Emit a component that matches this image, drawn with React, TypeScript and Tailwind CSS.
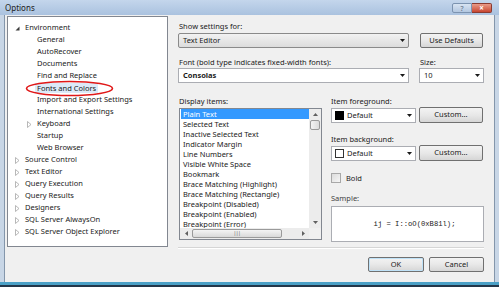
import React from "react"

const envChildren = [
  "General",
  "AutoRecover",
  "Documents",
  "Find and Replace",
  "Fonts and Colors",
  "Import and Export Settings",
  "International Settings",
  "Keyboard",
  "Startup",
  "Web Browser",
]

const topLevel = [
  "Source Control",
  "Text Editor",
  "Query Execution",
  "Query Results",
  "Designers",
  "SQL Server AlwaysOn",
  "SQL Server Object Explorer",
]

const displayItems = [
  "Plain Text",
  "Selected Text",
  "Inactive Selected Text",
  "Indicator Margin",
  "Line Numbers",
  "Visible White Space",
  "Bookmark",
  "Brace Matching (Highlight)",
  "Brace Matching (Rectangle)",
  "Breakpoint (Disabled)",
  "Breakpoint (Enabled)",
  "Breakpoint (Error)",
]

const DownArrow = () => (
  <svg width="5" height="3" viewBox="0 0 5 3">
    <polygon points="0,0 5,0 2.5,3" fill="#1a1a1a" />
  </svg>
)

const Collapsed = () => (
  <svg width="5" height="7" viewBox="0 0 5 7">
    <polygon points="0.5,0.5 4,3.5 0.5,6.5" fill="none" stroke="#a6a6a6" strokeWidth="0.8" />
  </svg>
)

const Expanded = () => (
  <svg width="5" height="5" viewBox="0 0 5 5">
    <polygon points="4.5,0.5 4.5,4.5 0.5,4.5" fill="#3c3c3c" />
  </svg>
)

const TreeRow = ({ label, level, icon, selected }: { label: string; level: number; icon?: React.ReactNode; selected?: boolean }) => (
  <div className={`h-[12px] flex items-center ${level === 0 ? "pl-[7px]" : "pl-[19px]"}`}>
    <span className="w-[10px] h-[12px] flex items-center justify-start">{icon}</span>
    <span className={selected ? "bg-[#dceaf8] -ml-[2px] px-[2px] leading-[10px]" : ""}>{label}</span>
  </div>
)

const Btn = ({ children, className }: { children: React.ReactNode; className?: string }) => (
  <div
    className={`h-[15px] flex items-center justify-center rounded-[2px] border border-[#707070] bg-gradient-to-b from-[#f3f3f3] via-[#e8e8e8] to-[#d6d6d6] text-[#1a1a1a] ${className ?? ""}`}
  >
    {children}
  </div>
)

const Combo = ({ children, className, raised }: { children: React.ReactNode; className?: string; raised?: boolean }) => (
  <div
    className={`h-[15px] flex items-center justify-between pl-[3px] pr-[3px] ${
      raised
        ? "rounded-[2px] border border-[#8a8a8a] bg-gradient-to-b from-[#f2f2f2] to-[#dcdcdc]"
        : "border border-[#abadb3] bg-white"
    } ${className ?? ""}`}
  >
    <div className="flex items-center gap-[3px]">{children}</div>
    <DownArrow />
  </div>
)

const ScrollArrow = ({ dir }: { dir: "up" | "down" | "left" | "right" }) => {
  const pts = {
    up: "0,3 5,3 2.5,0",
    down: "0,0 5,0 2.5,3",
    left: "3,0 3,5 0,2.5",
    right: "0,0 0,5 3,2.5",
  }[dir]
  const vertical = dir === "up" || dir === "down"
  return (
    <svg width={vertical ? 5 : 3} height={vertical ? 3 : 5} viewBox={vertical ? "0 0 5 3" : "0 0 3 5"}>
      <polygon points={pts} fill="#606060" />
    </svg>
  )
}

export default function App() {
  return (
    <div className="w-[499px] h-[287px] flex flex-col bg-[#c8d6e6] font-['Noto_Sans',sans-serif] text-[7.5px] text-[#1a1a1a] overflow-hidden">
      {/* title bar */}
      <div className="h-[15px] flex items-center justify-between bg-gradient-to-b from-[#c4d6ec] to-[#aac2df] pl-[5px] pr-[7px]">
        <span className="text-[8px] text-[#202020]">Options</span>
        <div className="flex items-start h-[15px] pt-[3px]">
          <div className="w-[20px] h-[10px] rounded-l-[2px] border border-[#7c93b0] bg-gradient-to-b from-[#d8e4f2] to-[#b3c7e0] flex items-center justify-center text-[7px] leading-none text-[#5a6a80]">
            ?
          </div>
          <div className="w-[20px] h-[10px] rounded-r-[2px] border border-[#8a3a30] border-l-0 bg-gradient-to-b from-[#e89a88] to-[#c8442f] flex items-center justify-center text-[8px] leading-none text-white font-bold">
            ×
          </div>
        </div>
      </div>

      {/* body */}
      <div className="h-[267px] mx-[4px] border-l border-r border-[#8496ab] bg-[#f0f0f0] flex items-start pl-[2px]">
        {/* tree */}
        <div className="relative mt-[1px] w-[161px] h-[231px] border border-[#828790] bg-white pt-[5px]">
          <TreeRow label="Environment" level={0} icon={<Expanded />} />
          {envChildren.map((c) => (
            <TreeRow
              key={c}
              label={c}
              level={1}
              icon={c === "Keyboard" ? <Collapsed /> : undefined}
              selected={c === "Fonts and Colors"}
            />
          ))}
          {topLevel.map((t) => (
            <TreeRow key={t} label={t} level={0} icon={<Collapsed />} />
          ))}
          <svg className="absolute left-[17px] top-[63px]" width="89" height="17" viewBox="0 0 89 17">
            <ellipse cx="44.5" cy="8.5" rx="43" ry="7" fill="none" stroke="#e01818" strokeWidth="1.6" />
          </svg>
        </div>

        {/* settings */}
        <div className="ml-[10px] w-[306px] pt-[6px] flex flex-col">
          <div className="h-[10px] leading-[10px] pl-[1px]">Show settings for:</div>
          <div className="mt-[2px] flex items-center justify-between">
            <Combo raised className="w-[231px]">
              <span className="pl-[1px]">Text Editor</span>
            </Combo>
            <Btn className="w-[63px] mr-[1px]">Use Defaults</Btn>
          </div>

          <div className="mt-[9px] h-[10px] leading-[10px] flex">
            <span className="w-[242px] pl-[1px]">Font (bold type indicates fixed-width fonts):</span>
            <span>Size:</span>
          </div>
          <div className="mt-[1px] flex items-center justify-between">
            <Combo className="w-[231px]">
              <span className="pl-[1px] font-bold">Consolas</span>
            </Combo>
            <Combo className="w-[65px]">
              <span className="pl-[1px]">10</span>
            </Combo>
          </div>

          <div className="mt-[13px] flex pl-[1px]">
            {/* display items */}
            <div className="w-[143px] flex flex-col">
              <div className="h-[10px] leading-[10px]">Display items:</div>
              <div className="mt-[2px] h-[132px] border border-[#828790] bg-white flex flex-col">
                <div className="flex h-[119px]">
                  <div className="flex-1 flex flex-col">
                    {displayItems.map((d, i) => (
                      <div
                        key={d}
                        className={`h-[10px] leading-[10px] pl-[2px] ml-[1px] ${i === 0 ? "bg-[#3399ff] text-white" : ""}`}
                      >
                        {d}
                      </div>
                    ))}
                  </div>
                  <div className="w-[12px] flex flex-col bg-[#ececec]">
                    <div className="h-[11px] flex items-center justify-center">
                      <ScrollArrow dir="up" />
                    </div>
                    <div className="mx-[1px] h-[10px] rounded-[2px] border border-[#9a9a9a] bg-gradient-to-r from-[#f4f4f4] to-[#dcdcdc]" />
                    <div className="flex-1" />
                    <div className="h-[11px] flex items-center justify-center">
                      <ScrollArrow dir="down" />
                    </div>
                  </div>
                </div>
                <div className="flex h-[11px] bg-[#ececec]">
                  <div className="w-[12px] flex items-center justify-center">
                    <ScrollArrow dir="left" />
                  </div>
                  <div className="w-[90px] my-[1px] rounded-[2px] border border-[#9a9a9a] bg-gradient-to-b from-[#f4f4f4] to-[#d9d9d9] flex items-center justify-center text-[5px] leading-none text-[#606060] tracking-[-0.5px]">
                    |||
                  </div>
                  <div className="flex-1 flex items-center justify-end pr-[4px]">
                    <ScrollArrow dir="right" />
                  </div>
                  <div className="w-[12px] bg-[#f0f0f0]" />
                </div>
              </div>
            </div>

            {/* item colors */}
            <div className="ml-[9px] w-[153px] flex flex-col">
              <div className="h-[10px] leading-[10px]">Item foreground:</div>
              <div className="mt-[2px] flex items-center justify-between">
                <Combo className="w-[85px]">
                  <span className="w-[9px] h-[9px] bg-black" />
                  <span>Default</span>
                </Combo>
                <Btn className="w-[64px] h-[16px] -mt-[1px] mr-[1px]">Custom...</Btn>
              </div>

              <div className="mt-[11px] h-[10px] leading-[10px]">Item background:</div>
              <div className="mt-[2px] flex items-center justify-between">
                <Combo className="w-[85px]">
                  <span className="w-[9px] h-[9px] border border-[#333] bg-white" />
                  <span>Default</span>
                </Combo>
                <Btn className="w-[64px] h-[16px] -mt-[1px] mr-[1px]">Custom...</Btn>
              </div>

              <div className="mt-[12px] flex items-center gap-[5px] h-[10px]">
                <span className="w-[10px] h-[10px] border border-[#a8a8a8] bg-gradient-to-br from-[#dcdcdc] to-[#f6f6f6]" />
                <span className="leading-[10px]">Bold</span>
              </div>

              <div className="mt-[10px] h-[10px] leading-[10px] text-[#444]">Sample:</div>
              <div className="mt-[3px] h-[36px] border border-[#abadb3] bg-white flex items-center justify-center font-['Liberation_Mono',monospace] text-[7.2px] pl-[14px]">
                ij = I::oO(0xB81l);
              </div>
            </div>
          </div>

          <div className="mt-[5px] h-[2px] border-t border-[#d5d5d5] border-b border-b-white" />

          <div className="mt-[8px] flex justify-end gap-[5px]">
            <Btn className="w-[56px] border-[#3c7fb1] shadow-[inset_0_0_0_1px_#bfe2f8]">OK</Btn>
            <Btn className="w-[55px]">Cancel</Btn>
          </div>
        </div>
      </div>

      {/* bottom frame */}
      <div className="h-[5px] bg-[#4aa0c6] border-b-2 border-[#23374a]" />
    </div>
  )
}
